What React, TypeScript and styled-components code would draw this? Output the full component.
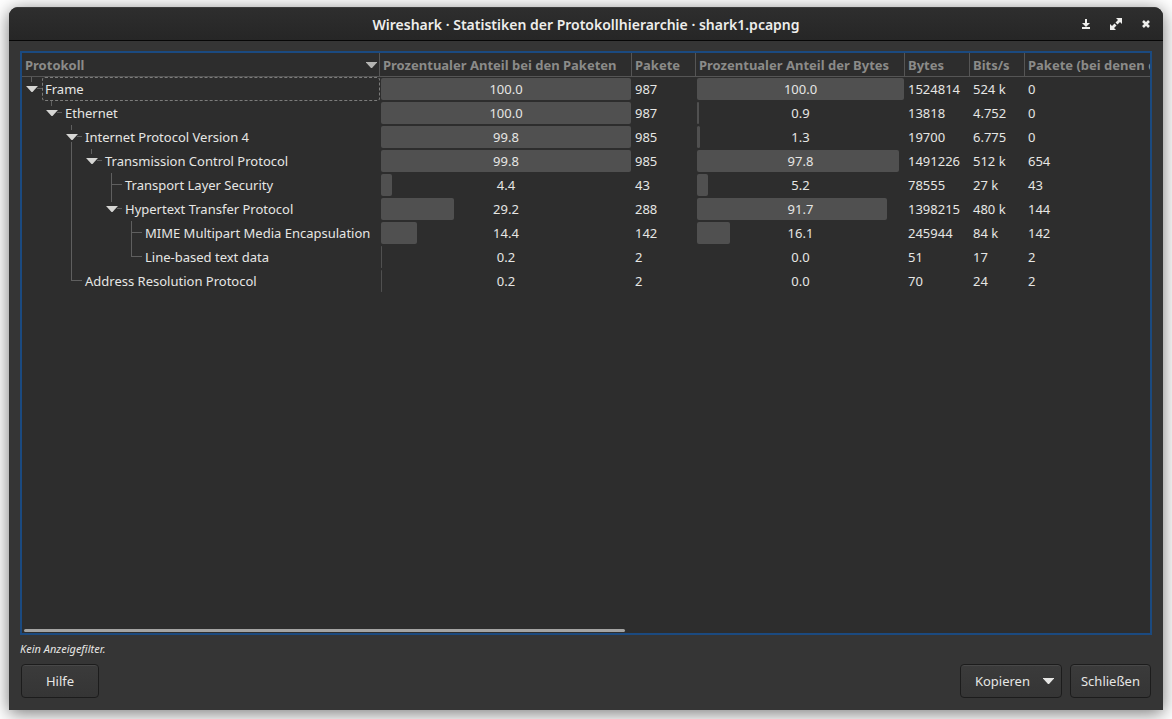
import React from 'react';
import styled, { createGlobalStyle } from 'styled-components';

const GlobalStyle = createGlobalStyle`
  * { box-sizing: border-box; }
  body {
    margin: 0;
    background: #fff;
    color: #e6e6e4;
    font: 13px/18px "Noto Sans", "Liberation Sans", sans-serif;
    overflow: hidden;
  }
  button { font: inherit; color: inherit; }
`;

const Desktop = styled.div`
  display: flex;
  min-height: 100vh;
  padding: 7px 9px 9px;
`;

const Window = styled.main`
  display: flex;
  flex: 1;
  flex-direction: column;
  min-width: 0;
  background: #353535;
  border-radius: 9px 9px 0 0;
  box-shadow: 0 3px 18px rgba(0, 0, 0, 0.55);
  overflow: hidden;
`;

const TitleBar = styled.header`
  display: grid;
  grid-template-columns: 1fr auto 1fr;
  align-items: center;
  height: 34px;
  padding: 0 7px;
  background: linear-gradient(#2e2e2e, #262626);
  border-top: 1px solid #3c3c3c;
  border-bottom: 1px solid #070707;
`;

const Title = styled.h1`
  grid-column: 2;
  margin: 0;
  padding-top: 2px;
  font-size: 14px;
  font-weight: 600;
  line-height: 20px;
  color: #eeeeec;
  white-space: nowrap;
`;

const WindowControls = styled.div`
  display: flex;
  justify-content: flex-end;
  gap: 10px;
`;

const ControlButton = styled.button`
  width: 20px;
  height: 20px;
  padding: 0;
  border: 0;
  background: none;
  color: #eeeeec;

  svg { display: block; }
`;

const Content = styled.div`
  display: flex;
  flex: 1;
  flex-direction: column;
  min-height: 0;
  padding: 10px 11px 12px;
`;

const TreeView = styled.section`
  display: flex;
  flex: 1;
  flex-direction: column;
  min-height: 0;
  border: 2px solid #1b4a80;
  background: #2d2d2d;
`;

const Viewport = styled.div`
  flex: 1;
  min-height: 0;
  overflow: hidden;
`;

const ScrollTrack = styled.div`
  padding: 0 2px 1px;
`;

const ScrollThumb = styled.div`
  width: 53.5%;
  min-width: 24px;
  height: 3px;
  border-radius: 2px;
  background: #a4a4a3;
`;

const Table = styled.table`
  width: 187%;
  table-layout: fixed;
  border-collapse: separate;
  border-spacing: 0;
`;

const Column = styled.col<{ $width?: number }>`
  width: ${({ $width }) => ($width ? `${$width}px` : 'auto')};
`;

const HeaderCell = styled.th`
  height: 24px;
  padding: 0 2px 0 3px;
  border-right: 1px solid #555;
  border-bottom: 1px solid #555;
  color: #8b8b89;
  font-weight: 700;
  text-align: left;
  white-space: nowrap;
`;

const SortLabel = styled.div`
  display: flex;
  align-items: center;
  justify-content: space-between;

  svg { color: #b4b4b2; }
`;

const Cell = styled.td`
  height: 24px;
  padding: 0 3px;
  white-space: nowrap;
`;

const NameCell = styled.th`
  height: 24px;
  padding: 0;
  font-weight: 400;
  text-align: left;
  white-space: nowrap;
`;

const BarCell = styled.td`
  height: 24px;
  padding: 1px;
`;

const NameLayout = styled.div`
  display: flex;
  height: 24px;
`;

const Name = styled.span<{ $focused: boolean }>`
  flex: 1;
  padding: 2px;
  border: 1px dashed ${({ $focused }) => ($focused ? '#7c7c7b' : 'transparent')};
  border-radius: 3px;
`;

const Toggle = styled.button`
  width: 20px;
  height: 24px;
  padding: 0;
  border: 0;
  background: none;
`;

const GuideIcon = styled.svg`
  display: block;
  flex: none;
`;

const Meter = styled.div`
  display: grid;
  align-items: center;
  height: 22px;
`;

const MeterFill = styled.div`
  grid-area: 1 / 1;
  height: 22px;
  min-width: 1px;
  border-radius: 2px;
  background: #505050;
`;

const MeterValue = styled.span`
  grid-area: 1 / 1;
  text-align: center;
`;

const FilterNote = styled.p`
  margin: 6px 0 7px;
  font-size: 11px;
  font-style: italic;
  line-height: 16px;
`;

const Actions = styled.footer`
  display: flex;
  gap: 8px;
  padding: 0 1px;
`;

const ActionButton = styled.button<{ $push?: boolean }>`
  display: flex;
  align-items: center;
  justify-content: center;
  gap: 13px;
  min-width: 78px;
  height: 34px;
  margin-left: ${({ $push }) => ($push ? 'auto' : '0')};
  padding: 0 ${({ $push }) => ($push ? '7px 0 14px' : '10px')};
  border: 1px solid #1c1c1c;
  border-radius: 4px;
  background: linear-gradient(#3b3b3b, #353535);
  box-shadow: inset 0 1px #484848;
`;

type Guide = 'blank' | 'line' | 'tee' | 'end' | 'open' | 'openMore';

const guidePaths: Record<Guide, string> = {
  blank: '',
  line: 'M9.5 0V24',
  tee: 'M9.5 0V24M10 11.5H20',
  end: 'M9.5 0V12M10 11.5H20',
  open: 'M9.5 0V5M15 11.5H20',
  openMore: 'M9.5 0V5M15 11.5H20M9.5 17V24',
};

function GuideMark({ kind }: { kind: Guide }) {
  const expandable = kind === 'open' || kind === 'openMore';
  return (
    <GuideIcon width="20" height="24" viewBox="0 0 20 24" aria-hidden="true">
      <path d={guidePaths[kind]} fill="none" stroke="#5f5f5f" />
      {expandable && <path d="M4.5 9H15.5V9.5L10.5 15H9.5L4.500 9.500Z" fill="#d6d6d4" />}
    </GuideIcon>
  );
}

function DownTriangle() {
  return (
    <svg width="11" height="6" viewBox="0 0 11 6" aria-hidden="true">
      <path d="M0 0H11V0.5L6 6H5L0 0.5Z" fill="currentColor" />
    </svg>
  );
}

interface Protocol {
  name: string;
  guides: Guide[];
  packetShare: string;
  packets: string;
  byteShare: string;
  bytes: string;
  bits: string;
  endPackets: string;
}

const protocols: Protocol[] = [
  { name: 'Frame', guides: ['open'], packetShare: '100.0', packets: '987', byteShare: '100.0', bytes: '1524814', bits: '524 k', endPackets: '0' },
  { name: 'Ethernet', guides: ['blank', 'open'], packetShare: '100.0', packets: '987', byteShare: '0.9', bytes: '13818', bits: '4.752', endPackets: '0' },
  { name: 'Internet Protocol Version 4', guides: ['blank', 'blank', 'openMore'], packetShare: '99.8', packets: '985', byteShare: '1.3', bytes: '19700', bits: '6.775', endPackets: '0' },
  { name: 'Transmission Control Protocol', guides: ['blank', 'blank', 'line', 'open'], packetShare: '99.8', packets: '985', byteShare: '97.8', bytes: '1491226', bits: '512 k', endPackets: '654' },
  { name: 'Transport Layer Security', guides: ['blank', 'blank', 'line', 'blank', 'tee'], packetShare: '4.4', packets: '43', byteShare: '5.2', bytes: '78555', bits: '27 k', endPackets: '43' },
  { name: 'Hypertext Transfer Protocol', guides: ['blank', 'blank', 'line', 'blank', 'open'], packetShare: '29.2', packets: '288', byteShare: '91.7', bytes: '1398215', bits: '480 k', endPackets: '144' },
  { name: 'MIME Multipart Media Encapsulation', guides: ['blank', 'blank', 'line', 'blank', 'blank', 'tee'], packetShare: '14.4', packets: '142', byteShare: '16.1', bytes: '245944', bits: '84 k', endPackets: '142' },
  { name: 'Line-based text data', guides: ['blank', 'blank', 'line', 'blank', 'blank', 'end'], packetShare: '0.2', packets: '2', byteShare: '0.0', bytes: '51', bits: '17', endPackets: '2' },
  { name: 'Address Resolution Protocol', guides: ['blank', 'blank', 'end'], packetShare: '0.2', packets: '2', byteShare: '0.0', bytes: '70', bits: '24', endPackets: '2' },
];

function Share({ value }: { value: string }) {
  return (
    <BarCell>
      <Meter>
        {Number(value) > 0 && <MeterFill style={{ width: `${value}%` }} />}
        <MeterValue>{value}</MeterValue>
      </Meter>
    </BarCell>
  );
}

function ProtocolRow({ protocol, focused }: { protocol: Protocol; focused: boolean }) {
  return (
    <tr>
      <NameCell scope="row">
        <NameLayout>
          {protocol.guides.map((kind, level) =>
            kind === 'open' || kind === 'openMore' ? (
              <Toggle key={level} type="button" aria-label={protocol.name} aria-expanded="true">
                <GuideMark kind={kind} />
              </Toggle>
            ) : (
              <GuideMark key={level} kind={kind} />
            ),
          )}
          <Name $focused={focused}>{protocol.name}</Name>
        </NameLayout>
      </NameCell>
      <Share value={protocol.packetShare} />
      <Cell>{protocol.packets}</Cell>
      <Share value={protocol.byteShare} />
      <Cell>{protocol.bytes}</Cell>
      <Cell>{protocol.bits}</Cell>
      <Cell>{protocol.endPackets}</Cell>
    </tr>
  );
}

export default function App() {
  return (
    <>
      <GlobalStyle />
      <Desktop>
        <Window>
          <TitleBar>
            <Title>Wireshark · Statistiken der Protokollhierarchie · shark1.pcapng</Title>
            <WindowControls>
              <ControlButton type="button" aria-label="Minimieren">
                <svg width="20" height="20" viewBox="0 0 20 20">
                  <path d="M9 5H11V9H14L10 13L6 9H9ZM6 13H14V15H6Z" fill="currentColor" />
                </svg>
              </ControlButton>
              <ControlButton type="button" aria-label="Maximieren">
                <svg width="20" height="20" viewBox="0 0 20 20">
                  <path d="M10 4H16V10L14 8L11.5 10.5L9.5 8.500L12 6ZM4 10L6 12L8.500 9.500L10.500 11.500L8 14L10 16H4Z" fill="currentColor" />
                </svg>
              </ControlButton>
              <ControlButton type="button" aria-label="Fenster schließen">
                <svg width="20" height="20" viewBox="0 0 20 20">
                  <path d="M7 7L13 13M13 7L7 13" stroke="currentColor" strokeWidth="2.6" />
                </svg>
              </ControlButton>
            </WindowControls>
          </TitleBar>
          <Content>
            <TreeView>
              <Viewport>
                <Table>
                  <colgroup>
                    <Column $width={358} />
                    <Column $width={252} />
                    <Column $width={64} />
                    <Column $width={209} />
                    <Column $width={65} />
                    <Column $width={55} />
                    <Column />
                  </colgroup>
                  <thead>
                    <tr>
                      <HeaderCell scope="col" aria-sort="descending">
                        <SortLabel>
                          Protokoll
                          <DownTriangle />
                        </SortLabel>
                      </HeaderCell>
                      <HeaderCell scope="col">Prozentualer Anteil bei den Paketen</HeaderCell>
                      <HeaderCell scope="col">Pakete</HeaderCell>
                      <HeaderCell scope="col">Prozentualer Anteil der Bytes</HeaderCell>
                      <HeaderCell scope="col">Bytes</HeaderCell>
                      <HeaderCell scope="col">Bits/s</HeaderCell>
                      <HeaderCell scope="col">Pakete (bei denen d</HeaderCell>
                    </tr>
                  </thead>
                  <tbody>
                    {protocols.map((protocol, index) => (
                      <ProtocolRow key={protocol.name} protocol={protocol} focused={index === 0} />
                    ))}
                  </tbody>
                </Table>
              </Viewport>
              <ScrollTrack>
                <ScrollThumb />
              </ScrollTrack>
            </TreeView>
            <FilterNote>Kein Anzeigefilter.</FilterNote>
            <Actions>
              <ActionButton type="button">Hilfe</ActionButton>
              <ActionButton type="button" $push>
                Kopieren
                <DownTriangle />
              </ActionButton>
              <ActionButton type="button">Schließen</ActionButton>
            </Actions>
          </Content>
        </Window>
      </Desktop>
    </>
  );
}
